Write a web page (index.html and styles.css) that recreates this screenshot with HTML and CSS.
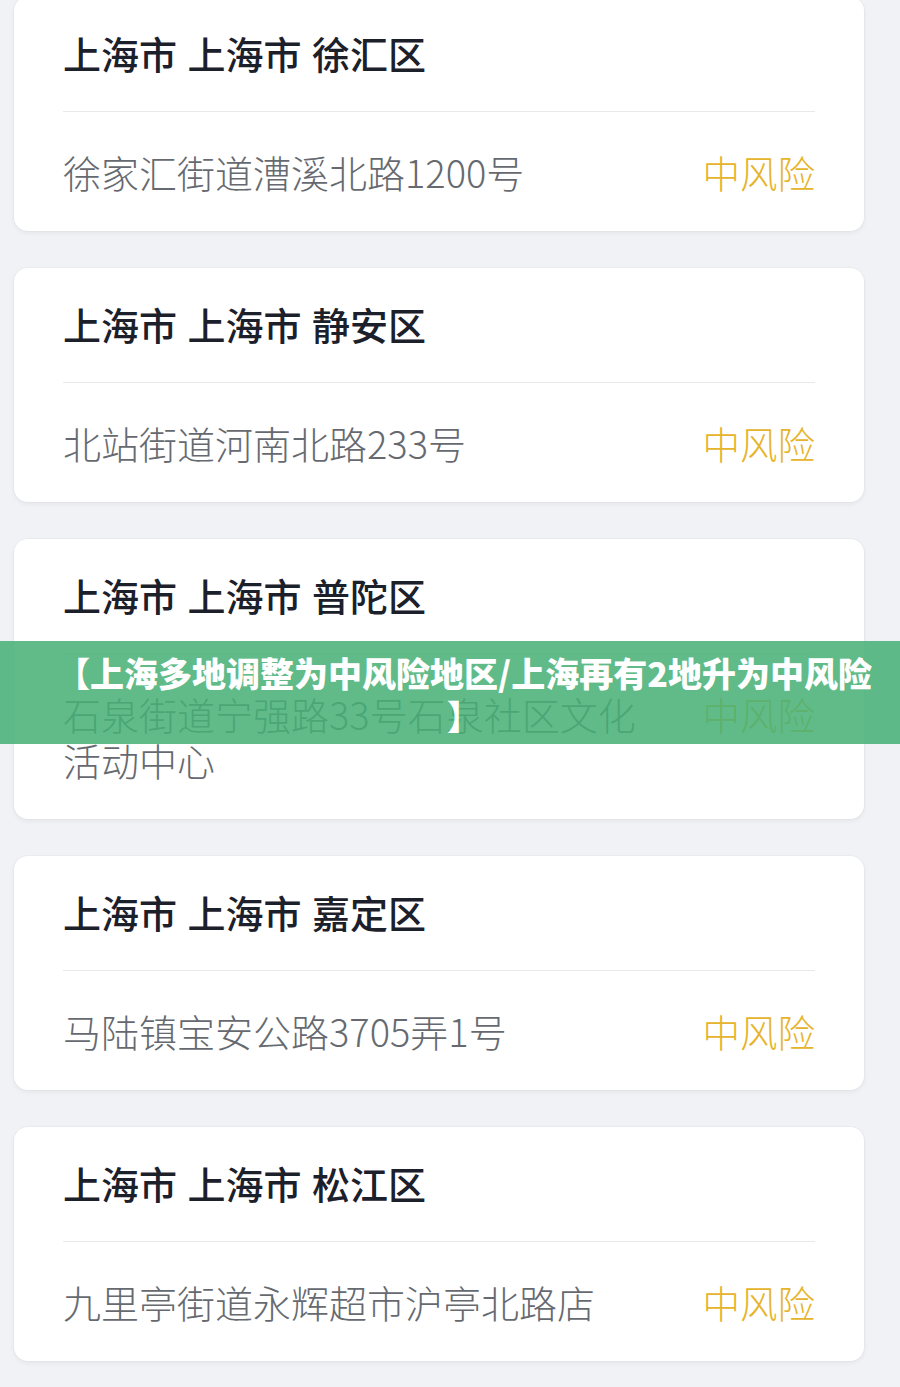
FILE: index.html
```html
<!DOCTYPE html>
<html lang="zh-CN">
<head>
<meta charset="utf-8">
<title>上海中风险地区</title>
<link rel="stylesheet" href="styles.css">
</head>
<body>
<main class="list">
  <section class="card">
    <h2 class="card-title">上海市 上海市 徐汇区</h2>
    <div class="card-row">
      <p class="address">徐家汇街道漕溪北路1200号</p>
      <span class="risk">中风险</span>
    </div>
  </section>
  <section class="card">
    <h2 class="card-title">上海市 上海市 静安区</h2>
    <div class="card-row">
      <p class="address">北站街道河南北路233号</p>
      <span class="risk">中风险</span>
    </div>
  </section>
  <section class="card">
    <h2 class="card-title">上海市 上海市 普陀区</h2>
    <div class="card-row">
      <p class="address">石泉街道宁强路33号石泉社区文化活动中心</p>
      <span class="risk">中风险</span>
    </div>
  </section>
  <section class="card">
    <h2 class="card-title">上海市 上海市 嘉定区</h2>
    <div class="card-row">
      <p class="address">马陆镇宝安公路3705弄1号</p>
      <span class="risk">中风险</span>
    </div>
  </section>
  <section class="card">
    <h2 class="card-title">上海市 上海市 松江区</h2>
    <div class="card-row">
      <p class="address">九里亭街道永辉超市沪亭北路店</p>
      <span class="risk">中风险</span>
    </div>
  </section>
</main>
<div class="banner">
  <p class="banner-text"><span class="banner-line">【上海多地调整为中风险地区/上海再有2地升为中风险</span><span class="banner-line">】</span></p>
</div>
</body>
</html>
```

FILE: styles.css
```css
* {
  box-sizing: border-box;
}

html, body {
  margin: 0;
  padding: 0;
}

body {
  background: #f0f2f5;
  font-family: "Noto Sans CJK SC", "Noto Sans", sans-serif;
  width: 900px;
  height: 1387px;
  overflow: hidden;
  position: relative;
}

.list {
  display: flex;
  flex-direction: column;
  gap: 37px;
  padding-left: 14px;
  margin-top: -3px;
}

.card {
  width: 850px;
  background: #ffffff;
  border-radius: 14px;
  padding: 0 49px;
  box-shadow: 0 2px 5px rgba(30, 40, 60, 0.06), 0 0 0 1px rgba(30, 40, 60, 0.025);
}

.card-title {
  margin: 0;
  padding: 31px 0 33px;
  font-size: 38px;
  line-height: 50px;
  font-weight: 500;
  color: #1b202b;
  word-spacing: 2px;
  border-bottom: 1px solid #e8e9eb;
}

.card-row {
  display: flex;
  align-items: flex-start;
  justify-content: space-between;
  padding: 37px 0 36px;
}

.address {
  margin: 0;
  width: 592px;
  font-size: 38px;
  line-height: 46px;
  font-weight: 300;
  color: #666a70;
}

.risk {
  font-size: 37.5px;
  line-height: 46px;
  font-weight: 300;
  color: #e6b42c;
  white-space: nowrap;
}

.banner {
  position: absolute;
  left: 0;
  top: 641px;
  width: 900px;
  height: 103px;
  background: rgba(70, 176, 118, 0.86);
  display: flex;
  justify-content: center;
  padding: 10px 0 0 28px;
}

.banner-text {
  margin: 0;
  width: 860px;
  text-align: center;
  font-size: 34px;
  line-height: 43px;
  font-weight: 900;
  color: #ffffff;
}

.banner-line {
  display: block;
  white-space: nowrap;
}
```
